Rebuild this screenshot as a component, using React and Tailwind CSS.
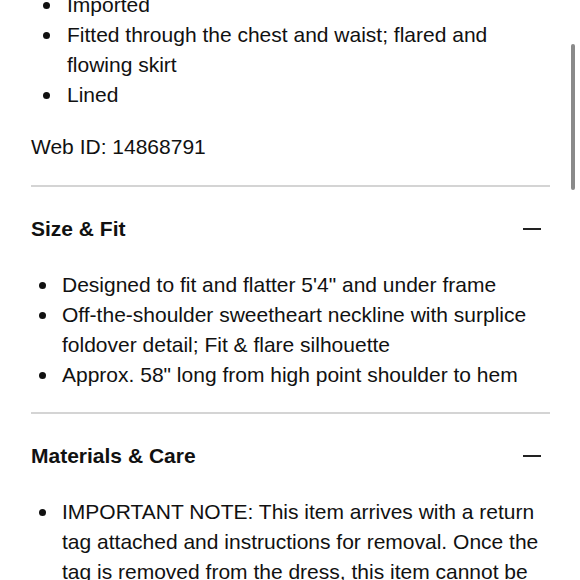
import React from "react";

function Dot() {
  return <span className="block w-[7px] h-[7px] rounded-full bg-[#111] shrink-0 mt-[12px]" />;
}

function List({ items, dotMl, textMl }) {
  return (
    <ul className="flex flex-col">
      {items.map((t, i) => (
        <li key={i} className="flex items-start">
          <span className={dotMl}><Dot /></span>
          <span className={textMl}>{t}</span>
        </li>
      ))}
    </ul>
  );
}

function Minus() {
  return <span className="block w-[18px] h-[2px] bg-[#222] mr-[9px]" />;
}

function Section({ title, items, last }) {
  return (
    <div className={last ? "pt-[27px]" : "pt-[27px] pb-[22px] border-b-2 border-[#d4d4d4]"}>
      <div className="flex items-center justify-between h-[30px]">
        <span className="font-bold">{title}</span>
        <Minus />
      </div>
      <div className="mt-[26px]">
        <List items={items} dotMl="ml-[8px]" textMl="ml-[16px]" />
      </div>
    </div>
  );
}

export default function App() {
  return (
    <div
      className="relative w-[580px] h-[580px] overflow-hidden bg-white text-[#111] text-[21px] leading-[30px]"
      style={{ fontFamily: '"Liberation Sans", Arial, sans-serif' }}
    >
      <div className="-mt-[10px] pl-[31px] w-[550px]">
        <div className="pb-[23px] border-b-2 border-[#d4d4d4]">
          <List
            items={[
              "Imported",
              "Fitted through the chest and waist; flared and flowing skirt",
              "Lined",
            ]}
            dotMl="ml-[12px]"
            textMl="ml-[17px]"
          />
          <div className="mt-[22px]">Web ID: 14868791</div>
        </div>
        <Section
          title="Size & Fit"
          items={[
            "Designed to fit and flatter 5'4\" and under frame",
            "Off-the-shoulder sweetheart neckline with surplice foldover detail; Fit & flare silhouette",
            "Approx. 58\" long from high point shoulder to hem",
          ]}
        />
        <Section
          last
          title="Materials & Care"
          items={[
            "IMPORTANT NOTE: This item arrives with a return tag attached and instructions for removal. Once the tag is removed from the dress, this item cannot be returned.",
          ]}
        />
      </div>
      <div className="absolute left-[571px] top-[44px] w-[4px] h-[146px] rounded-full bg-[#8a8a8a]" />
    </div>
  );
}
